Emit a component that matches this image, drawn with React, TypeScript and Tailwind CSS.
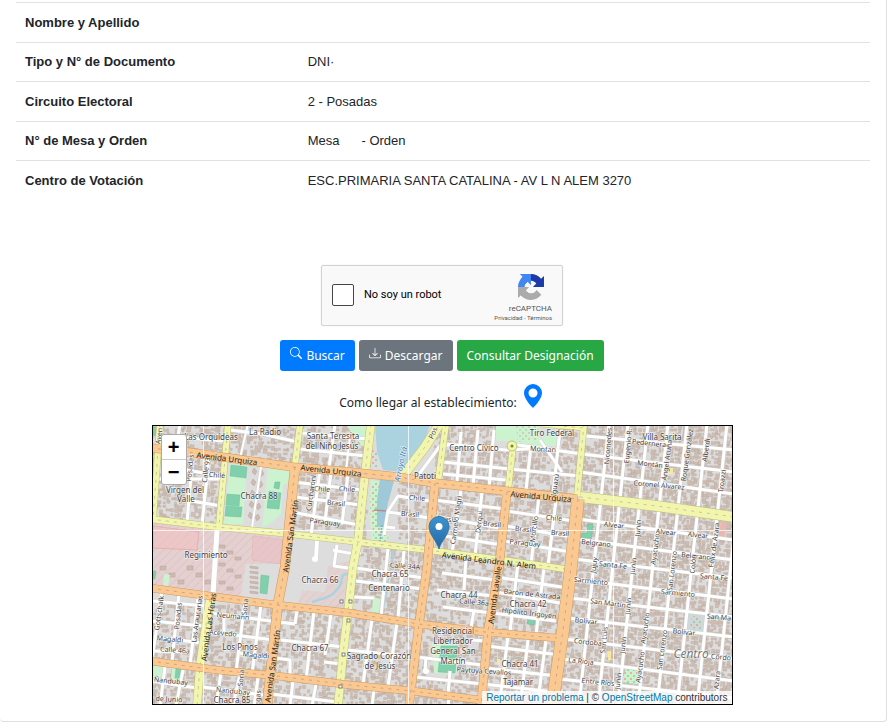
import { BsDownload, BsGeoAltFill, BsSearch } from "react-icons/bs";

type Point = [number, number];

interface Road {
  pts: Point[];
  w: number;
}

interface Label {
  text: string;
  x: number;
  y: number;
  rot?: number;
  size?: number;
  kind?: "area" | "avenue" | "water" | "center";
}

const ORANGE: Road[] = [
  { w: 8, pts: [[150, 448], [187, 452], [293, 467], [350, 472], [398, 477], [435, 483], [505, 491], [577, 499]] },
  { w: 9, pts: [[295, 467], [285, 567], [278, 603], [267, 706]] },
  { w: 8, pts: [[435, 483], [427, 567], [419, 624], [409, 706]] },
  { w: 8, pts: [[507, 492], [499, 567], [488, 631], [481, 706]] },
  { w: 7, pts: [[150, 588], [217, 597], [277, 605], [350, 613], [419, 624], [485, 632], [557, 638]] },
  { w: 7, pts: [[150, 661], [217, 670], [277, 676], [350, 685], [412, 691], [488, 701], [520, 706]] },
  { w: 12, pts: [[578, 499], [571, 567], [563, 630], [552, 706]] },
];

const YELLOW: Road[] = [
  { w: 6, pts: [[160, 424], [153, 519]] },
  { w: 6, pts: [[228, 424], [224, 470], [219, 526]] },
  { w: 6, pts: [[300, 424], [295, 465]] },
  { w: 8, pts: [[371, 424], [365, 474], [358, 541], [353, 567], [348, 612], [343, 654], [338, 706]] },
  { w: 8, pts: [[210, 599], [200, 666], [197, 706]] },
  { w: 6, pts: [[446, 424], [438, 482]] },
  { w: 9, pts: [[442, 420], [425, 447], [402, 477]] },
  { w: 6, pts: [[513, 446], [508, 491]] },
  { w: 6, pts: [[584, 424], [577, 496]] },
  { w: 5, pts: [[540, 424], [584, 428]] },
  { w: 6, pts: [[150, 519], [217, 527], [290, 534], [350, 541], [428, 550], [495, 559], [545, 566], [571, 570]] },
  { w: 10, pts: [[580, 497], [657, 506], [734, 517]] },
];

// East side streets: parallel columns, plus the cross streets listed by y at each end.
const EAST_COLUMNS = [609, 628, 648, 668, 687, 707, 727, 746];
const EAST_ROWS: [number, number, number][] = [
  [586, 436, 450],
  [582, 454, 472],
  [580, 472, 494],
  [578, 519, 540],
  [576, 539, 560],
  [574, 559, 578],
  [572, 579, 599],
  [570, 598, 617],
  [568, 618, 637],
  [565, 639, 659],
  [563, 659, 681],
  [560, 679, 698],
];

const WHITE: Road[] = [
  // north west
  { w: 3, pts: [[180, 424], [176, 450]] },
  { w: 3, pts: [[193, 452], [187, 523]] },
  { w: 3, pts: [[209, 456], [202, 525]] },
  { w: 3, pts: [[155, 479], [222, 479]] },
  { w: 3, pts: [[186, 470], [222, 476]] },
  { w: 3, pts: [[186, 500], [221, 506]] },
  { w: 3, pts: [[160, 436], [225, 441]] },
  { w: 2, pts: [[248, 424], [240, 458]] },
  { w: 2, pts: [[262, 460], [252, 528]] },
  { w: 3, pts: [[230, 430], [262, 434], [298, 442]] },
  // between San Martin and the stream
  { w: 3, pts: [[320, 470], [311, 535]] },
  { w: 3, pts: [[331, 472], [325, 522]] },
  { w: 3, pts: [[348, 474], [342, 524]] },
  { w: 3, pts: [[293, 482], [362, 490]] },
  { w: 3, pts: [[295, 497], [361, 505]] },
  { w: 3, pts: [[292, 512], [359, 525]] },
  { w: 3, pts: [[302, 433], [368, 439]] },
  { w: 3, pts: [[300, 449], [366, 456]] },
  { w: 3, pts: [[335, 424], [329, 468]] },
  { w: 2, pts: [[350, 436], [346, 471]] },
  { w: 4, pts: [[317, 540], [316, 559]] },
  { w: 3, pts: [[361, 553], [348, 553], [333, 550]] },
  { w: 3, pts: [[337, 545], [334, 566], [355, 569]] },
  // downtown west
  { w: 3, pts: [[430, 501], [398, 496], [388, 511], [384, 535]] },
  { w: 3, pts: [[388, 512], [430, 518]] },
  { w: 3, pts: [[386, 527], [395, 528]] },
  { w: 3, pts: [[417, 477], [440, 446], [450, 445]] },
  { w: 3, pts: [[446, 444], [506, 450], [542, 448]] },
  { w: 3, pts: [[443, 462], [510, 469], [579, 476]] },
  { w: 3, pts: [[443, 474], [506, 480]] },
  { w: 3, pts: [[461, 432], [457, 482]] },
  { w: 3, pts: [[478, 430], [473, 486]] },
  { w: 3, pts: [[494, 430], [489, 488]] },
  { w: 3, pts: [[461, 490], [452, 553]] },
  { w: 3, pts: [[482, 492], [475, 556]] },
  { w: 3, pts: [[434, 500], [505, 509]] },
  { w: 3, pts: [[433, 516], [505, 529]] },
  { w: 3, pts: [[432, 534], [502, 545]] },
  // around Iguazu
  { w: 3, pts: [[540, 440], [562, 472]] },
  { w: 3, pts: [[511, 444], [582, 454]] },
  { w: 3, pts: [[560, 430], [553, 494]] },
  { w: 3, pts: [[531, 446], [526, 490]] },
  { w: 3, pts: [[539, 496], [531, 564]] },
  { w: 3, pts: [[556, 500], [548, 566]] },
  { w: 3, pts: [[506, 511], [574, 521]] },
  { w: 3, pts: [[506, 526], [572, 537]] },
  { w: 3, pts: [[504, 541], [571, 552]] },
  // Chacra 65 to 44
  { w: 3, pts: [[388, 549], [381, 616]] },
  { w: 3, pts: [[404, 551], [398, 618]] },
  { w: 3, pts: [[356, 568], [424, 578]] },
  { w: 3, pts: [[356, 581], [423, 589]] },
  { w: 3, pts: [[354, 597], [374, 598]] },
  { w: 3, pts: [[466, 558], [464, 590]] },
  { w: 3, pts: [[442, 573], [496, 580]] },
  { w: 3, pts: [[437, 590], [494, 596]] },
  { w: 3, pts: [[443, 607], [556, 621]] },
  { w: 3, pts: [[474, 610], [471, 628]] },
  { w: 3, pts: [[496, 577], [568, 588]] },
  { w: 3, pts: [[495, 592], [566, 604]] },
  { w: 3, pts: [[518, 563], [510, 632]] },
  { w: 3, pts: [[544, 568], [536, 635]] },
  // Sagrado Corazon, Chacra 41
  { w: 3, pts: [[372, 619], [363, 684]] },
  { w: 3, pts: [[397, 622], [388, 687]] },
  { w: 3, pts: [[348, 650], [415, 657]] },
  { w: 3, pts: [[417, 657], [482, 665]] },
  { w: 3, pts: [[415, 677], [483, 684], [554, 692]] },
  { w: 3, pts: [[426, 657], [425, 672]] },
  { w: 3, pts: [[450, 671], [448, 694]] },
  { w: 3, pts: [[487, 646], [560, 655]] },
  { w: 3, pts: [[508, 636], [500, 700]] },
  { w: 3, pts: [[528, 640], [521, 700]] },
  { w: 3, pts: [[546, 640], [538, 700]] },
  { w: 3, pts: [[484, 668], [557, 676]] },
  { w: 3, pts: [[470, 640], [487, 641]] },
  { w: 3, pts: [[374, 690], [372, 706]] },
  { w: 3, pts: [[449, 697], [448, 706]] },
  // Los Pinos and Magaldi
  { w: 3, pts: [[162, 590], [152, 660]] },
  { w: 3, pts: [[179, 593], [172, 662]] },
  { w: 3, pts: [[198, 597], [190, 665]] },
  { w: 3, pts: [[152, 601], [205, 606]] },
  { w: 3, pts: [[152, 621], [203, 626]] },
  { w: 3, pts: [[156, 637], [202, 643]] },
  { w: 3, pts: [[152, 651], [193, 652]] },
  { w: 3, pts: [[210, 613], [278, 622], [295, 624]] },
  { w: 3, pts: [[208, 632], [274, 640]] },
  { w: 3, pts: [[224, 618], [224, 635]] },
  { w: 3, pts: [[245, 601], [236, 672]] },
  { w: 3, pts: [[261, 604], [252, 674]] },
  { w: 3, pts: [[240, 653], [273, 659]] },
  { w: 3, pts: [[297, 611], [295, 624]] },
  { w: 3, pts: [[314, 611], [306, 680]] },
  { w: 3, pts: [[331, 614], [325, 655]] },
  { w: 3, pts: [[281, 640], [344, 647]] },
  { w: 3, pts: [[324, 662], [342, 664]] },
  { w: 3, pts: [[276, 658], [290, 660], [290, 678]] },
  { w: 3, pts: [[165, 667], [160, 706]] },
  { w: 3, pts: [[183, 670], [176, 706]] },
  { w: 3, pts: [[152, 681], [197, 688]] },
  { w: 3, pts: [[203, 687], [270, 696]] },
  { w: 3, pts: [[221, 672], [216, 706]] },
  { w: 3, pts: [[240, 674], [233, 706]] },
  { w: 3, pts: [[258, 678], [254, 706]] },
  { w: 3, pts: [[271, 694], [337, 702]] },
  { w: 3, pts: [[293, 681], [290, 706]] },
  { w: 3, pts: [[316, 684], [312, 706]] },
  { w: 5, pts: [[217, 530], [213, 594]] },
];

const LABELS: Label[] = [
  { text: "Las Orquídeas", x: 211, y: 436, kind: "area" },
  { text: "La Radio", x: 265, y: 431, size: 8 },
  { text: "Santa Teresita", x: 333, y: 435, kind: "area" },
  { text: "del Niño Jesús", x: 332, y: 445, kind: "area" },
  { text: "Virgen del", x: 185, y: 489, kind: "area" },
  { text: "Valle", x: 186, y: 498, kind: "area" },
  { text: "Chacra 88", x: 259, y: 495, kind: "area" },
  { text: "Regimiento", x: 206, y: 554, kind: "area" },
  { text: "Chacra 66", x: 320, y: 579, kind: "area" },
  { text: "Chacra 65", x: 390, y: 573, kind: "area" },
  { text: "Centenario", x: 389, y: 587, kind: "area" },
  { text: "Centro Cívico", x: 474, y: 447, kind: "area" },
  { text: "Tiro Federal", x: 552, y: 432, kind: "area" },
  { text: "Villa Sarita", x: 662, y: 436, kind: "area" },
  { text: "Patoti", x: 425, y: 475, kind: "area" },
  { text: "Chacra 44", x: 459, y: 594, kind: "area" },
  { text: "Chacra 42", x: 528, y: 603, kind: "area" },
  { text: "Residencial", x: 453, y: 630, kind: "area" },
  { text: "Libertador", x: 453, y: 640, kind: "area" },
  { text: "General San", x: 453, y: 650, kind: "area" },
  { text: "Martín", x: 453, y: 660, kind: "area" },
  { text: "Sagrado Corazón", x: 379, y: 655, kind: "area" },
  { text: "de Jesús", x: 380, y: 665, kind: "area" },
  { text: "Los Pinos", x: 240, y: 646, kind: "area" },
  { text: "Chacra 67", x: 310, y: 647, kind: "area" },
  { text: "Chacra 41", x: 520, y: 663, kind: "area" },
  { text: "Tajamar", x: 518, y: 681, kind: "area" },
  { text: "Centro", x: 691, y: 653, kind: "center" },
  { text: "Avenida Urquiza", x: 227, y: 458, rot: 7, kind: "avenue" },
  { text: "Avenida Urquiza", x: 331, y: 470, rot: 6, kind: "avenue" },
  { text: "Avenida Urquiza", x: 541, y: 496, rot: 5, kind: "avenue" },
  { text: "Avenida Leandro N. Alem", x: 489, y: 560, rot: 7, kind: "avenue" },
  { text: "Avenida San Martín", x: 290, y: 536, rot: -82, kind: "avenue" },
  { text: "Avenida San Martín", x: 272, y: 666, rot: -82, kind: "avenue" },
  { text: "Avenida Las Heras", x: 208, y: 627, rot: -82, kind: "avenue" },
  { text: "Avenida Lavalle", x: 494, y: 595, rot: -82, kind: "avenue" },
  { text: "Arroyo Itá", x: 400, y: 464, rot: -78, size: 8, kind: "water" },
  { text: "Pos", x: 433, y: 433, rot: -65 },
  { text: "Aven", x: 159, y: 436, rot: -82 },
  { text: "Posadas", x: 190, y: 468, rot: -84 },
  { text: "Calle 93", x: 206, y: 470, rot: -82 },
  { text: "Chile", x: 217, y: 475, rot: 5 },
  { text: "Chile", x: 322, y: 489, rot: 4 },
  { text: "Chile", x: 347, y: 489, rot: 4 },
  { text: "Brasil", x: 336, y: 503, rot: 6 },
  { text: "Paraguay", x: 325, y: 522, rot: 7 },
  { text: "Curcharoni", x: 311, y: 493, rot: -82 },
  { text: "Chile", x: 417, y: 498, rot: 5 },
  { text: "Brasil", x: 410, y: 514, rot: 5 },
  { text: "Brasil", x: 446, y: 519, rot: 6 },
  { text: "Brasil", x: 492, y: 524, rot: 6 },
  { text: "Carmelo Magri", x: 456, y: 520, rot: -82 },
  { text: "Derqui", x: 479, y: 522, rot: -84 },
  { text: "Morcillo", x: 534, y: 529, rot: -82 },
  { text: "Brasil", x: 524, y: 529, rot: 6 },
  { text: "Paraguay", x: 525, y: 543, rot: 6 },
  { text: "Chile", x: 554, y: 518, rot: 5 },
  { text: "Brasil", x: 560, y: 533, rot: 5 },
  { text: "Montan", x: 543, y: 449, rot: 3 },
  { text: "Iguazú", x: 555, y: 485, rot: -82 },
  { text: "Calle 34A", x: 405, y: 566, rot: 4 },
  { text: "Calle 36a", x: 474, y: 602, rot: 5 },
  { text: "Barón de Astrada", x: 532, y: 594, rot: 6 },
  { text: "Hipólito Irigoyen", x: 529, y: 613, rot: 7 },
  { text: "Paytuya Cevallos", x: 484, y: 671, rot: 4 },
  { text: "Nicomedes", x: 608, y: 446, rot: -85 },
  { text: "Eugenio R.", x: 628, y: 446, rot: -85 },
  { text: "Ángel Acuña", x: 667, y: 460, rot: -82 },
  { text: "Roque González", x: 687, y: 455, rot: -82 },
  { text: "Alberdi", x: 706, y: 450, rot: -82 },
  { text: "Troazzi", x: 722, y: 481, rot: -82 },
  { text: "Pedernera", x: 649, y: 443, rot: 6 },
  { text: "Montán", x: 650, y: 464, rot: 6 },
  { text: "Coronel Álvarez", x: 659, y: 485, rot: 5 },
  { text: "Alvear", x: 614, y: 525, rot: 6 },
  { text: "Alvear", x: 666, y: 532, rot: 6 },
  { text: "Alvear", x: 698, y: 535, rot: 6 },
  { text: "Junín", x: 638, y: 528, rot: -85 },
  { text: "Belgrano", x: 596, y: 543, rot: 6 },
  { text: "Belgrano", x: 696, y: 556, rot: 6 },
  { text: "Ayacucho", x: 655, y: 549, rot: -82 },
  { text: "Félix de Azara", x: 714, y: 545, rot: -82 },
  { text: "Colón", x: 693, y: 564, rot: -84 },
  { text: "San Lorenzo", x: 672, y: 571, rot: -83 },
  { text: "Jujuy", x: 594, y: 565, rot: -82 },
  { text: "Junín", x: 633, y: 566, rot: -84 },
  { text: "Santa Fe", x: 613, y: 565, rot: 6 },
  { text: "Santa Fe", x: 714, y: 577, rot: 5 },
  { text: "Sarmiento", x: 591, y: 581, rot: 6 },
  { text: "Sarmiento", x: 678, y: 593, rot: 5 },
  { text: "San Martín", x: 608, y: 603, rot: 7 },
  { text: "San Ma", x: 719, y: 617, rot: 5 },
  { text: "Junín", x: 628, y: 606, rot: -84 },
  { text: "Bolívar", x: 586, y: 621, rot: 6 },
  { text: "Bolívar", x: 684, y: 632, rot: 6 },
  { text: "Córdoba", x: 588, y: 642, rot: 6 },
  { text: "Córdo", x: 721, y: 657, rot: 6 },
  { text: "San Luis", x: 604, y: 640, rot: -84 },
  { text: "Junín", x: 623, y: 645, rot: -84 },
  { text: "Ayacucho", x: 645, y: 628, rot: -82 },
  { text: "Ayacucho", x: 640, y: 667, rot: -82 },
  { text: "San Lorenzo", x: 662, y: 650, rot: -82 },
  { text: "La Rioja", x: 581, y: 661, rot: 6 },
  { text: "Entre Ríos", x: 598, y: 682, rot: 6 },
  { text: "Junín", x: 618, y: 681, rot: -84 },
  { text: "Azara", x: 717, y: 680, rot: -84 },
  { text: "Neumann", x: 233, y: 616, rot: 5 },
  { text: "Acevedo", x: 223, y: 633, rot: 5 },
  { text: "Magaldi", x: 256, y: 655, rot: 5 },
  { text: "Magaldi", x: 170, y: 639, rot: 5 },
  { text: "Calle 46a", x: 175, y: 650, rot: 4 },
  { text: "Gottschalk", x: 159, y: 613, rot: -82 },
  { text: "Posadas", x: 178, y: 616, rot: -84 },
  { text: "Las Araucarias", x: 197, y: 619, rot: -82 },
  { text: "Soria", x: 245, y: 607, rot: -84 },
  { text: "Soria", x: 241, y: 678, rot: -84 },
  { text: "Ñandubay", x: 171, y: 681, rot: 6 },
  { text: "Ñandubay", x: 233, y: 691, rot: 6 },
  { text: "de Junio", x: 169, y: 699, rot: 3 },
  { text: "Chacra 85", x: 232, y: 699, kind: "area" },
  { text: "gas", x: 258, y: 696, rot: -84 },
];

const GREENS = [
  "230,464 247,466 243,524 224,524",
  "268,467 292,471 288,484 283,485 281,514 270,524 262,527",
  "496,424 540,424 540,439 558,430 556,446 518,446 510,441 496,441",
  "371,480 394,484 386,500 388,542 372,540 369,510",
  "345,424 369,424 366,446 362,446",
  "153,665 165,667 163,680 153,678",
  "172,667 182,668 180,680 171,679",
  "164,574 170,575 168,586 163,585",
  "432,642 458,645 456,674 434,673",
  "373,597 381,599 379,613 372,612",
  "694,613 706,614 704,632 690,630",
];

const PITCHES = [
  "231,465 247,467 246,478 230,476",
  "227,494 240,495 239,506 226,505",
  "226,506 242,507 241,517 225,516",
  "269,491 281,493 279,509 267,508",
  "275,482 280,482 279,489 274,488",
  "261,575 269,576 267,594 260,593",
  "441,646 458,646 455,673 438,672",
  "588,524 593,524 591,541 581,540 582,533 587,533",
  "176,668 181,669 179,679 175,678",
  "153,571 156,571 155,579 153,579",
  "528,619 535,620 534,625 527,624",
  "639,688 643,689 642,695 638,694",
  "153,427 157,427 155,435 153,435",
];

function seeded(seed: number) {
  let s = seed;
  return () => {
    s = (s * 16807) % 2147483647;
    return s / 2147483647;
  };
}

// Footprints are scattered on a jittered grid, thinner in the open western blocks.
const BUILDINGS = (() => {
  const rand = seeded(3270);
  const out: string[] = [];
  for (let y = 424; y < 706; y += 4) {
    for (let x = 150; x < 736; x += 4) {
      const cx = x + rand() * 2;
      const cy = y + rand() * 2;
      const density = x > 580 ? 0.88 : 0.7;
      const w = 2 + Math.floor(rand() * 3);
      const h = 2 + Math.floor(rand() * 3);
      if (rand() > density) continue;
      if (cy > 528 && cy < 604 && cx < 352) continue;
      if (cx > 222 && cx < 294 && cy > 460 && cy < 530) continue;
      if (cx > 366 && cx < 398 && cy < 545) continue;
      if (cx > 396 && cx < 434 && cy < 470) continue;
      if (cx > 434 && cx < 458 && cy > 642 && cy < 674) continue;
      if (cx > 496 && cx < 558 && cy < 446) continue;
      out.push(`M${cx.toFixed(1)} ${cy.toFixed(1)}l${w} .4l-.4 ${h}l-${w} -.4z`);
    }
  }
  return out.join("");
})();

function toPath(pts: Point[]) {
  return "M" + pts.map((p) => p.join(" ")).join("L");
}

function Roads({ roads, fill, casing, dash }: { roads: Road[]; fill: string; casing: string; dash?: string }) {
  return (
    <g fill="none" strokeLinejoin="round">
      {roads.map((r, i) => (
        <path key={i} d={toPath(r.pts)} stroke={casing} strokeWidth={r.w + 1} />
      ))}
      {roads.map((r, i) => (
        <path key={i} d={toPath(r.pts)} stroke={fill} strokeWidth={r.w} />
      ))}
      {dash &&
        roads.map((r, i) => (
          <path key={i} d={toPath(r.pts)} stroke={dash} strokeWidth={1} strokeDasharray="3 5" opacity={0.7} />
        ))}
    </g>
  );
}

function MapLabel({ text, x, y, rot = 0, size, kind }: Label) {
  const fontSize = size ?? (kind === "center" ? 12 : kind === "avenue" || kind === "area" ? 8 : 7);
  const fill = kind === "water" ? "#4d80b3" : kind === "center" ? "#777" : kind === "avenue" ? "#2b2418" : "#444";
  return (
    <text
      transform={`translate(${x} ${y}) rotate(${rot})`}
      textAnchor="middle"
      dominantBaseline="central"
      fontSize={fontSize}
      fontStyle={kind === "center" || kind === "water" ? "italic" : "normal"}
      fill={fill}
      stroke={kind === "avenue" ? "none" : "#fff"}
      strokeOpacity={0.6}
      strokeWidth={1.5}
      strokeLinejoin="round"
      paintOrder="stroke"
    >
      {text}
    </text>
  );
}

function StreetMap() {
  const streets: Road[] = [
    ...WHITE,
    ...EAST_COLUMNS.map((x): Road => ({ w: 3, pts: [[x, 424], [x - 15, 564], [x - 30, 706]] })),
    ...EAST_ROWS.map(([x, y1, y2]): Road => ({ w: 3, pts: [[x, y1], [734, y2]] })),
  ];

  return (
    <svg
      viewBox="153 426 579 278"
      preserveAspectRatio="xMidYMid slice"
      className="block h-full w-full font-['Noto_Sans',sans-serif]"
      role="img"
      aria-label="Mapa"
    >
      <defs>
        <pattern id="hatch" width="6" height="6" patternUnits="userSpaceOnUse" patternTransform="rotate(45)">
          <rect width="6" height="6" fill="#e3d1d1" />
          <path d="M0 0V6" stroke="#e6bfc0" strokeWidth="1.6" />
        </pattern>
        <pattern id="dots" width="6" height="6" patternUnits="userSpaceOnUse">
          <circle cx="1" cy="1" r="1" fill="#ee9a8e" />
          <circle cx="4" cy="4" r="1" fill="#8fce9b" />
        </pattern>
        <linearGradient id="pin" x1="0" y1="0" x2="0" y2="1">
          <stop offset="0" stopColor="#3d94d0" />
          <stop offset="1" stopColor="#2467a3" />
        </linearGradient>
      </defs>

      <rect x="150" y="420" width="586" height="290" fill="#dedddd" />
      <path d={BUILDINGS} fill="#cdbfb5" stroke="#bca99c" strokeWidth="0.4" />

      <polygon points="150,522 285,537 278,602 150,586" fill="url(#hatch)" />
      <polygon points="153,526 199,532 197,550 153,548" fill="#efc3c3" opacity="0.7" stroke="#e7a3a3" />
      <polygon points="253,536 283,540 280,564 252,560" fill="#e9c0c3" opacity="0.6" stroke="#e7a3a3" strokeWidth="0.6" />
      <polygon points="350,561 352,611 298,603 302,590 325,592 328,566" fill="url(#hatch)" opacity="0.8" />
      <polygon points="246,564 283,564 277,604 240,598" fill="#dedddd" />
      <g fill="#cdbbb3" stroke="#b9a498" strokeWidth="0.5">
        {[0, 1, 2, 3, 4, 5].map((i) => (
          <rect key={i} x={160 + i * 9} y={566 + (i % 3) * 7} width="6" height="4" />
        ))}
        {[0, 1, 2, 3, 4, 5, 6, 7].map((i) => (
          <rect key={i} x={219 + (i % 3) * 8} y={545 + i * 6} width="6" height="3" />
        ))}
        {[0, 1, 2, 3, 4, 5].map((i) => (
          <path key={i} d={`M250 ${566 + i * 5}l8 1v2l-8 -1z`} />
        ))}
        {[0, 1, 2, 3, 4].map((i) => (
          <path key={i} d={`M${254 - i} ${468 + i * 11}l3 3l-2 4l-3 -3z M${262 - i} ${470 + i * 11}l-3 3l2 4l3 -3z`} />
        ))}
      </g>
      <path d="M351 573L343 575L340 586L333 594L325 598L312 602" fill="none" stroke="#abd3df" strokeWidth="2.5" />
      <path d="M394 547L392 560L389 575L387 592L383 610" fill="none" stroke="#abd3df" strokeWidth="1.5" />

      {GREENS.map((p) => (
        <polygon key={p} points={p} fill="#cdf2d0" />
      ))}
      <polygon points="369,448 377,452 378,468 367,467" fill="url(#dots)" />
      <polygon points="371,482 392,484 385,502 388,542 374,540 370,510" fill="url(#dots)" />
      <polygon points="516,426 540,426 538,440 518,442" fill="url(#dots)" opacity="0.6" />
      <polygon points="626,668 643,668 642,685 622,682" fill="#cdf2d0" />
      <polygon points="626,668 643,668 642,685 622,682" fill="url(#dots)" />
      <polygon points="688,613 706,614 704,632 686,630" fill="#cfd9d9" />
      <polygon points="692,616 702,617 701,629 690,628" fill="url(#dots)" />
      <polygon points="505,648 540,652 538,662 504,660" fill="url(#dots)" opacity="0.7" />
      {PITCHES.map((p) => (
        <polygon key={p} points={p} fill="#7fd0ab" stroke="#5fb894" strokeWidth="0.4" />
      ))}
      <polygon points="375,424 430,424 424,443 412,460 402,472 383,470 377,452" fill="#aad3df" />
      <polygon points="380,479 394,481 388,503 384,527 377,527 377,500" fill="#9fc9d8" />
      <path d="M382 525L380 541" stroke="#7db5cc" strokeWidth="1.5" strokeDasharray="2 1" />
      <path d="M374 510L387 511" stroke="#b88" strokeWidth="1.5" />
      <g fill="#f7e9a0">
        <rect x="668" y="468" width="5" height="6" />
        <rect x="608" y="651" width="3" height="9" />
        <rect x="497" y="659" width="3" height="6" />
      </g>
      <polygon points="720,522 727,523 725,537 719,536" fill="#e8b9b3" />

      <Roads roads={streets} fill="#fff" casing="#d2d0ce" />
      <circle cx="315" cy="559" r="3" fill="#fff" />
      <circle cx="426" cy="671" r="3" fill="#fff" />
      <Roads roads={YELLOW} fill="#f2f5ad" casing="#bdc27c" dash="#b9b48a" />
      <Roads roads={ORANGE} fill="#fac992" casing="#cf9a5e" dash="#c58f74" />
      <circle cx="512" cy="446" r="5" fill="#f2f5ad" stroke="#bdc27c" />
      <circle cx="512" cy="446" r="1.5" fill="#6b8f2c" />
      <g fill="#fff" stroke="#666" strokeWidth="0.8">
        <rect x="340" y="600" width="3" height="3" />
        <rect x="349" y="600" width="3" height="3" />
        <rect x="347" y="619" width="3" height="3" />
        <rect x="342" y="653" width="3" height="3" />
        <rect x="339" y="685" width="3" height="3" />
      </g>

      <path d="M203.500 426V704M408.500 426V704M613.500 426V704M153 530.500H732" stroke="#fff" opacity="0.75" />

      {LABELS.map((l) => (
        <MapLabel key={`${l.text}-${l.x}-${l.y}`} {...l} />
      ))}

      <path
        d="M439 549C437 541 429 535 429 526.500A10 10 0 0 1 449 526.500C449 535 441 541 439 549Z"
        fill="url(#pin)"
        stroke="#2a6ea6"
        strokeWidth="0.8"
      />
      <circle cx="439" cy="526.500" r="3.500" fill="#fff" />
    </svg>
  );
}

function RecaptchaLogo() {
  return (
    <svg viewBox="0 0 64 64" className="h-[26px] w-[26px]" aria-hidden="true">
      <path
        fill="#1c3aa9"
        d="M64 31.955l-.033-1.370V4.687l-7.160 7.160C50.948 4.674 42.033.093 32.050.093c-10.400 0-19.622 4.960-25.458 12.640l11.736 11.860a15.550 15.550 0 0 1 4.754-5.334c2.050-1.600 4.952-2.906 8.968-2.906.485 0 .860.057 1.135.163 4.976.393 9.288 3.140 11.828 7.124l-8.307 8.307L64 31.953"
      />
      <path
        fill="#4285f4"
        d="M31.862.094l-1.370.033H4.594l7.160 7.160C4.580 13.147 0 22.060 0 32.046c0 10.400 4.960 19.622 12.640 25.458L24.500 45.768a15.550 15.550 0 0 1-5.334-4.754c-1.600-2.050-2.906-4.952-2.906-8.968 0-.485.057-.860.163-1.135.393-4.976 3.140-9.288 7.124-11.828l8.307 8.307L31.860.095"
      />
      <path
        fill="#ababab"
        d="M.001 32.045l.033 1.370v25.898l7.160-7.160c5.860 7.173 14.774 11.754 24.760 11.754 10.400 0 19.622-4.960 25.458-12.640l-11.736-11.860a15.550 15.550 0 0 1-4.754 5.334c-2.050 1.600-4.952 2.906-8.968 2.906-.485 0-.860-.057-1.135-.163-4.976-.393-9.288-3.140-11.828-7.124l8.307-8.307c-10.522.040-22.400.066-27.295-.005"
      />
    </svg>
  );
}

const ROWS = [
  { label: "Nombre y Apellido", value: "" },
  { label: "Tipo y N° de Documento", value: "DNI·" },
  { label: "Circuito Electoral", value: "2 - Posadas" },
  {
    label: "N° de Mesa y Orden",
    value: (
      <span className="flex gap-[22px]">
        <span>Mesa</span>
        <span>- Orden</span>
      </span>
    ),
  },
  { label: "Centro de Votación", value: "ESC.PRIMARIA SANTA CATALINA - AV L N ALEM 3270" },
];

export default function App() {
  return (
    <div className="bg-white pr-0.5 text-[#212529]">
      <main className="rounded-b border-r border-b border-[#dfdfdf] px-4 pt-0.5 pb-4">
        <table className="w-full border-collapse text-left font-['Liberation_Sans',Arial,sans-serif] text-[13px] leading-5">
          <tbody>
            {ROWS.map((r) => (
              <tr key={r.label} className="h-[39px] border-t border-[#dee2e6] odd:h-10">
                <th scope="row" className="w-1/3 px-[9px] font-bold">
                  {r.label}
                </th>
                <td className="px-[7px]">{r.value}</td>
              </tr>
            ))}
          </tbody>
        </table>

        <div className="mt-16 flex flex-col items-center pr-0.5 font-['Noto_Sans','Open_Sans',sans-serif]">
          <div className="flex h-[61px] w-[242px] items-center rounded-[2px] border border-[#d3d3d3] bg-[#f9f9f9] pr-2.5 pl-2.5 font-[Roboto,sans-serif] shadow-[0_0_2px_rgba(0,0,0,0.08)]">
            <input
              id="robot"
              type="checkbox"
              className="h-[22px] w-[22px] shrink-0 appearance-none rounded-[2px] border border-[#444] bg-white checked:bg-[#4285f4]"
            />
            <label htmlFor="robot" className="ml-2.5 flex-1 text-[11px] text-black">
              No soy un robot
            </label>
            <div className="flex flex-col items-end pt-1.5 text-[#555]">
              <div className="pr-2">
                <RecaptchaLogo />
              </div>
              <span className="mt-1 text-[8px] leading-[10px]">reCAPTCHA</span>
              <span className="text-[6px] leading-2">
                <a href="#privacidad">Privacidad</a> - <a href="#terminos">Términos</a>
              </span>
            </div>
          </div>

          <div className="mt-3.5 flex gap-1 text-[12px] text-white">
            <button type="button" className="flex h-[31px] items-center gap-1 rounded-[3px] bg-[#007bff] px-2.5">
              <BsSearch className="mb-1 h-3 w-3" />
              <span className="pt-0.5">Buscar</span>
            </button>
            <button type="button" className="flex h-[31px] items-center gap-1 rounded-[3px] bg-[#6c757d] px-2.5">
              <BsDownload className="mb-1 h-3 w-3" />
              <span className="pt-0.5">Descargar</span>
            </button>
            <button type="button" className="flex h-[31px] items-center rounded-[3px] bg-[#28a745] px-2.5">
              <span className="pt-0.5">Consultar Designación</span>
            </button>
          </div>

          <div className="mt-3 flex items-start gap-1 text-[12px]">
            <span className="pt-2.5 leading-5">Como llegar al establecimiento:</span>
            <a href="#mapa" aria-label="Como llegar" className="pt-px text-[#007bff]">
              <BsGeoAltFill className="h-6 w-6" />
            </a>
          </div>

          <div id="mapa" className="relative mt-3 h-[280px] w-full max-w-[581px] overflow-hidden border border-black">
            <StreetMap />
            <div className="absolute top-2 left-2 flex flex-col overflow-hidden rounded-[3px] border border-[#aaa] bg-white font-['Liberation_Sans',Arial,sans-serif] text-xl leading-6 font-bold text-black">
              <button type="button" aria-label="Acercar" className="h-[25px] w-6 border-b border-[#ccc]">
                +
              </button>
              <button type="button" aria-label="Alejar" className="h-6 w-6">
                −
              </button>
            </div>
            <div className="absolute right-0 bottom-0 bg-white/80 px-1 font-['Liberation_Sans',Arial,sans-serif] text-[10px] leading-[13px] text-[#333]">
              <a href="#reportar" className="text-[#0078a8]">
                Reportar un problema
              </a>{" "}
              | ©{" "}
              <a href="#osm" className="text-[#0078a8]">
                OpenStreetMap
              </a>{" "}
              contributors
            </div>
          </div>
        </div>
      </main>
    </div>
  );
}
